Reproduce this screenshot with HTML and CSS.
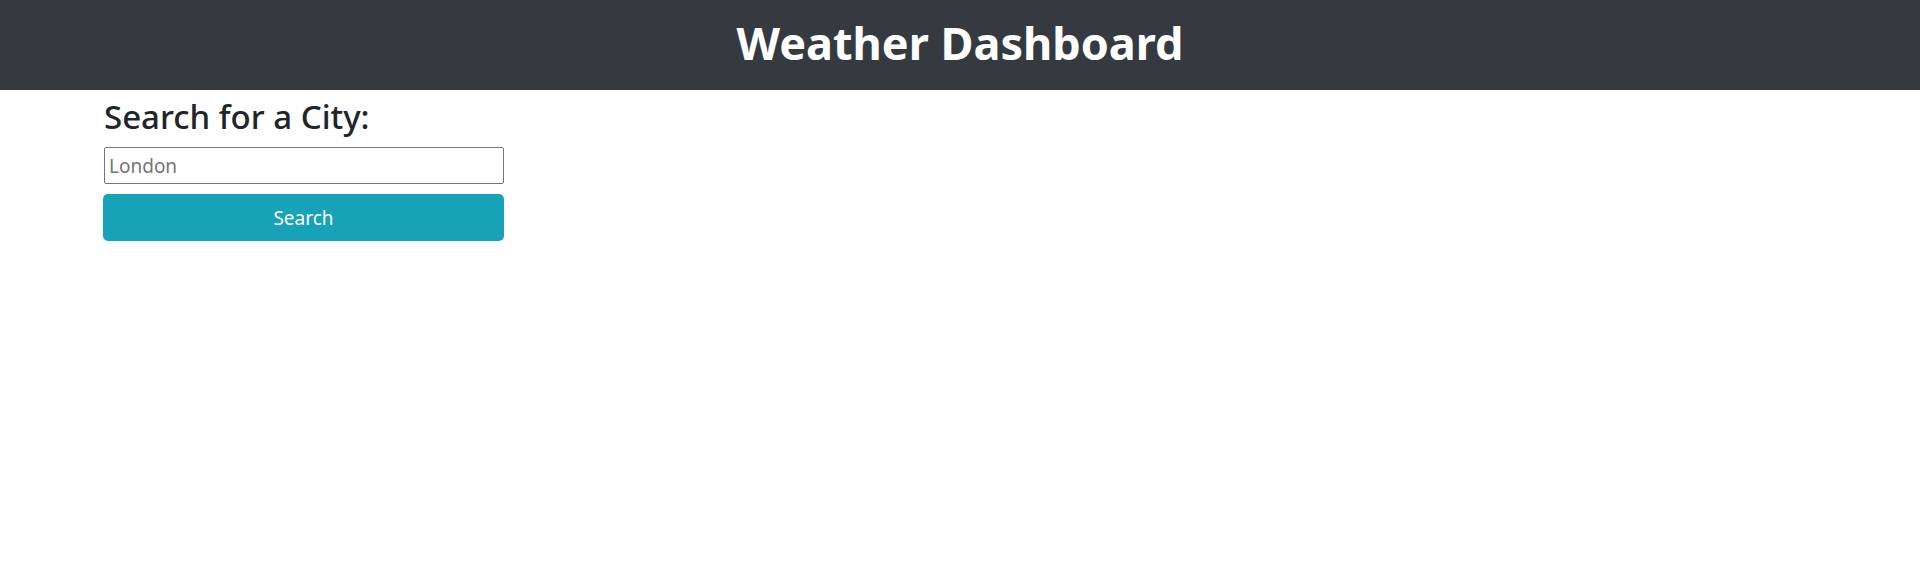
FILE: index.html
```html
<!DOCTYPE html>
<html lang="en">
<head>
<meta charset="utf-8">
<title>Weather Dashboard</title>
<link rel="stylesheet" href="styles.css">
</head>
<body>
<header class="topbar">
  <h1 class="title">Weather Dashboard</h1>
</header>
<main class="page">
  <section class="search-panel">
    <h2 class="search-heading">Search for a City:</h2>
    <input class="city-input" type="text" placeholder="London">
    <button class="search-btn" type="button">Search</button>
  </section>
</main>
</body>
</html>
```

FILE: styles.css
```css
* { box-sizing: border-box; }
html, body {
  margin: 0;
  padding: 0;
  background: #ffffff;
  color: #212529;
  font-family: "Noto Sans", "Open Sans", sans-serif;
}
.topbar {
  background: #343a40;
  height: 90px;
  display: flex;
  align-items: center;
  justify-content: center;
}
.title {
  margin: 0;
  padding-bottom: 5px;
  color: #ffffff;
  font-size: 45px;
  font-weight: 700;
  line-height: 54px;
}
.page {
  padding: 0 104px;
}
.search-panel {
  width: 400px;
  display: flex;
  flex-direction: column;
}
.search-heading {
  margin: 6px 0 9px 0;
  font-size: 33px;
  font-weight: 500;
  line-height: 42px;
  color: #212529;
}
.city-input {
  width: 400px;
  height: 37px;
  margin: 0;
  padding: 2px 4px;
  border: 1px solid #767676;
  border-radius: 2px;
  font-family: inherit;
  font-size: 19px;
  color: #212529;
  background: #ffffff;
  outline: none;
}
.city-input::placeholder {
  color: #757575;
  opacity: 1;
}
.search-btn {
  margin-top: 10px;
  width: 401px;
  margin-left: -1px;
  height: 47px;
  border: none;
  border-radius: 5px;
  background: #17a2b8;
  color: #ffffff;
  font-family: inherit;
  font-size: 19px;
  font-weight: 400;
  cursor: pointer;
}
```
